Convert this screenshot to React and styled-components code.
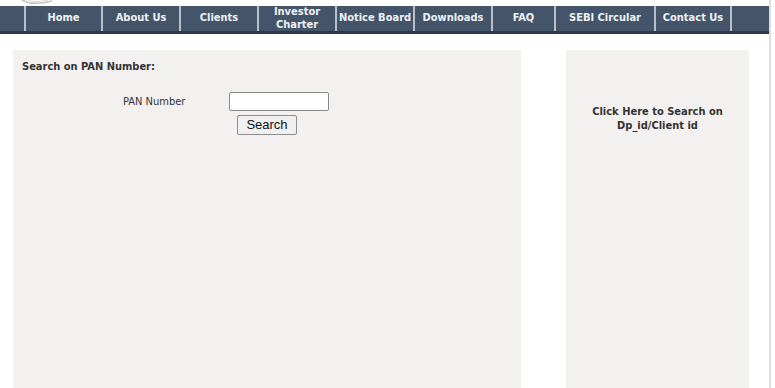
import React from "react";
import styled, { createGlobalStyle } from "styled-components";

const GlobalStyle = createGlobalStyle`
  html, body {
    margin: 0;
    padding: 0;
    background: #fff;
    overflow: hidden;
  }
  body {
    font-family: Tahoma, "DejaVu Sans Condensed", "Liberation Sans", sans-serif;
    color: #333;
  }
`;

const Page = styled.div`
  width: 769px;
  height: 388px;
  border-right: 2px solid #dedede;
  box-sizing: content-box;
`;

const TopStrip = styled.div`
  height: 6px;
  padding-left: 20px;
  overflow: hidden;
  line-height: 0;
`;

const NavBar = styled.ul`
  display: flex;
  margin: 0;
  padding: 0 0 0 24px;
  list-style: none;
  height: 25px;
  background: #44556a;
  border-bottom: 3px solid #2c3a4a;
`;

const NavItem = styled.li`
  display: flex;
  align-items: center;
  justify-content: center;
  width: ${(p) => p.w}px;
  border-left: 2px solid #b8c1cb;
  box-sizing: border-box;
  color: #eef1f5;
  font-weight: bold;
  font-size: 11px;
  line-height: 12.5px;
  text-align: center;
  white-space: nowrap;
  cursor: pointer;

  &:last-child {
    border-right: 2px solid #b8c1cb;
  }
`;

const Main = styled.div`
  display: flex;
  gap: 45px;
  padding: 16px 0 0 13px;
`;

const Panel = styled.div`
  background: #f3f1f0;
  width: ${(p) => p.w}px;
  height: 340px;
  box-sizing: border-box;
`;

const LeftPanel = styled(Panel)`
  padding: 10px 9px;
`;

const RightPanel = styled(Panel)`
  padding-top: 55px;
  text-align: center;
  font-weight: bold;
  font-size: 11px;
  line-height: 14px;
  color: #333;
  cursor: pointer;
`;

const Heading = styled.div`
  font-weight: bold;
  font-size: 11px;
  line-height: 13px;
`;

const FormRow = styled.div`
  display: flex;
  align-items: center;
  margin: 19px 0 0 101px;
`;

const Label = styled.span`
  width: 106px;
  font-size: 11px;
`;

const TextInput = styled.input`
  width: 100px;
  height: 19px;
  box-sizing: border-box;
  border: 1px solid #8a8a8a;
  border-radius: 2px;
  background: #fff;
  padding: 1px 3px;
`;

const ButtonRow = styled.div`
  margin: 4px 0 0 215px;
  line-height: 0;
`;

const Button = styled.button`
  width: 60px;
  height: 20px;
  padding: 0;
  font-family: "Liberation Sans", Arial, sans-serif;
  font-size: 13px;
  line-height: 18px;
  color: #111;
  background: #f0f0f0;
  border: 1px solid #8e8e8e;
  border-radius: 2px;
`;

const navItems = [
  { label: "Home", w: 77 },
  { label: "About Us", w: 78 },
  { label: "Clients", w: 78 },
  { label: "Investor\nCharter", w: 78 },
  { label: "Notice Board", w: 78 },
  { label: "Downloads", w: 78 },
  { label: "FAQ", w: 63 },
  { label: "SEBI Circular", w: 100 },
  { label: "Contact Us", w: 78 },
];

function LogoEdge() {
  return (
    <svg width="40" height="6" viewBox="0 0 40 6">
      <path d="M2 0 Q12 6 32 1" stroke="#c4c4c4" strokeWidth="1.5" fill="none" />
      <path d="M8 0 Q16 3 28 0" stroke="#dadada" strokeWidth="1" fill="none" />
    </svg>
  );
}

export default function App() {
  return (
    <>
      <GlobalStyle />
      <Page>
        <TopStrip>
          <LogoEdge />
        </TopStrip>
        <NavBar>
          {navItems.map((item, i) => (
            <NavItem key={i} w={item.w}>
              {item.label.split("\n").map((line, j) => (
                <React.Fragment key={j}>
                  {j > 0 && <br />}
                  {line}
                </React.Fragment>
              ))}
            </NavItem>
          ))}
        </NavBar>
        <Main>
          <LeftPanel w={508}>
            <Heading>Search on PAN Number:</Heading>
            <FormRow>
              <Label>PAN Number</Label>
              <TextInput type="text" />
            </FormRow>
            <ButtonRow>
              <Button>Search</Button>
            </ButtonRow>
          </LeftPanel>
          <RightPanel w={183}>
            Click Here to Search on
            <br />
            Dp_id/Client id
          </RightPanel>
        </Main>
      </Page>
    </>
  );
}
